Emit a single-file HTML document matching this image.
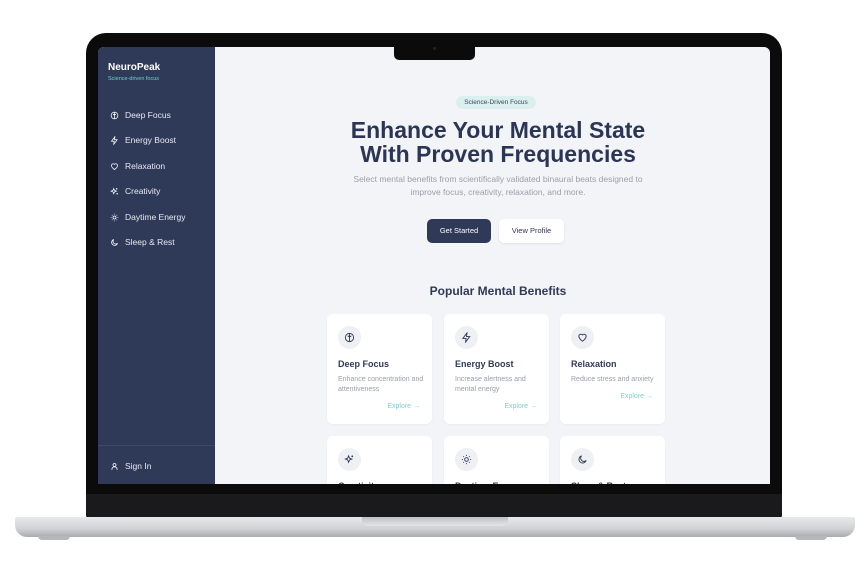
<!DOCTYPE html>
<html><head><style>
*{margin:0;padding:0;box-sizing:border-box}
body{width:864px;height:575px;background:#fff;position:relative;overflow:hidden;font-family:"Liberation Sans",sans-serif}
.abs{position:absolute}
.bezel{left:86px;top:33px;width:696px;height:486px;background:#0b0b0c;border-radius:20px 20px 4px 4px}
.screen{left:98px;top:47px;width:672px;height:437px;background:#f3f4f8;overflow:hidden;border-radius:6px 6px 0 0}
.side{left:0;top:0;width:117px;height:437px;background:#2f3a58;color:#fff}
.nav{position:absolute;left:12px;font-size:8.5px;color:#e6e9f2;display:flex;align-items:center;gap:6px}
.nav svg{width:9px;height:9px}
.card{position:absolute;width:105px;height:110px;background:#fff;border-radius:6px;box-shadow:0 1px 2px rgba(0,0,0,.04)}
.ic{position:absolute;left:11px;top:12px;width:23px;height:23px;border-radius:50%;background:#eef0f4;display:flex;align-items:center;justify-content:center}
.ic svg{width:11px;height:11px}
.ct{position:absolute;left:11px;top:45px;font-size:9px;font-weight:bold;color:#2f3a58}
.cd{position:absolute;left:11px;top:61px;font-size:7px;color:#9aa0ab;line-height:10px;width:90px}
.ce{position:absolute;right:12px;font-size:7px;color:#7fd0d0}
</style></head><body>
<div class="abs bezel"></div>
<div class="abs" style="left:86px;top:494px;width:696px;height:24px;background:#1a1a1c;border-radius:0 0 6px 6px"></div>
<div class="abs screen">
 <div class="abs side">
  <div class="abs" style="left:10px;top:15px;font-size:10px;font-weight:bold">NeuroPeak</div>
  <div class="abs" style="left:10px;top:29px;font-size:5.5px;color:#6fd3cf">Science-driven focus</div>
  <div class="nav" style="top:63px"><svg viewBox="0 0 24 24" fill="none" stroke="#fff" stroke-width="2"><circle cx="12" cy="12" r="9"/><path d="M12 4v16M8 9c2 0 4 1 4 3M16 9c-2 0-4 1-4 3"/></svg>Deep Focus</div>
  <div class="nav" style="top:88px"><svg viewBox="0 0 24 24" fill="none" stroke="#fff" stroke-width="2"><path d="M13 2L4 14h7l-1 8 9-12h-7z"/></svg>Energy Boost</div>
  <div class="nav" style="top:114px"><svg viewBox="0 0 24 24" fill="none" stroke="#fff" stroke-width="2"><path d="M12 20s-8-5-8-11a4.5 4.5 0 0 1 8-2.5A4.5 4.5 0 0 1 20 9c0 6-8 11-8 11z"/></svg>Relaxation</div>
  <div class="nav" style="top:139px"><svg viewBox="0 0 24 24" fill="none" stroke="#fff" stroke-width="2"><path d="M10 4l2 5 5 2-5 2-2 5-2-5-5-2 5-2zM18 3v4M16 5h4M19 16v4M17 18h4"/></svg>Creativity</div>
  <div class="nav" style="top:165px"><svg viewBox="0 0 24 24" fill="none" stroke="#fff" stroke-width="2"><circle cx="12" cy="12" r="4"/><path d="M12 2v2M12 20v2M2 12h2M20 12h2M5 5l1.5 1.5M17.5 17.5L19 19M5 19l1.5-1.5M17.5 6.5L19 5"/></svg>Daytime Energy</div>
  <div class="nav" style="top:190px"><svg viewBox="0 0 24 24" fill="none" stroke="#fff" stroke-width="2"><path d="M20 14A8 8 0 1 1 10 4a6 6 0 0 0 10 10z"/></svg>Sleep &amp; Rest</div>
  <div class="abs" style="left:0;top:398px;width:117px;height:1px;background:#3d486a"></div>
  <div class="nav" style="top:414px"><svg viewBox="0 0 24 24" fill="none" stroke="#fff" stroke-width="2"><circle cx="12" cy="8" r="4"/><path d="M5 21c0-5 3-8 7-8s7 3 7 8"/></svg>Sign In</div>
 </div>
 <div class="abs" style="left:358px;top:49px;width:80px;height:13px;border-radius:7px;background:#dcefef;font-size:6.5px;color:#3a4560;text-align:center;line-height:13px">Science-Driven Focus</div>
 <div class="abs" style="left:117px;top:71px;width:566px;text-align:center;font-size:23px;font-weight:bold;color:#2b3554;line-height:24px">Enhance Your Mental State<br>With Proven Frequencies</div>
 <div class="abs" style="left:117px;top:126px;width:566px;text-align:center;font-size:8.5px;color:#9a9fa8;line-height:13px">Select mental benefits from scientifically validated binaural beats designed to<br>improve focus, creativity, relaxation, and more.</div>
 <div class="abs" style="left:329px;top:172px;width:64px;height:24px;border-radius:5px;background:#2f3a58;color:#fff;font-size:7.5px;text-align:center;line-height:24px">Get Started</div>
 <div class="abs" style="left:401px;top:172px;width:65px;height:24px;border-radius:5px;background:#fff;color:#2f3a58;font-size:7.5px;text-align:center;line-height:24px;box-shadow:0 1px 2px rgba(0,0,0,.08)">View Profile</div>
 <div class="abs" style="left:117px;top:237px;width:566px;text-align:center;font-size:12px;font-weight:bold;color:#2f3a58">Popular Mental Benefits</div>
 <div class="card" style="left:229px;top:267px"><div class="ic"><svg viewBox="0 0 24 24" fill="none" stroke="#2f3a58" stroke-width="2"><circle cx="12" cy="12" r="9"/><path d="M12 4v16M8 9c2 0 4 1 4 3M16 9c-2 0-4 1-4 3"/></svg></div><div class="ct">Deep Focus</div><div class="cd">Enhance concentration and attentiveness</div><div class="ce" style="top:89px">Explore →</div></div>
 <div class="card" style="left:346px;top:267px"><div class="ic"><svg viewBox="0 0 24 24" fill="none" stroke="#2f3a58" stroke-width="2"><path d="M13 2L4 14h7l-1 8 9-12h-7z"/></svg></div><div class="ct">Energy Boost</div><div class="cd">Increase alertness and mental energy</div><div class="ce" style="top:89px">Explore →</div></div>
 <div class="card" style="left:462px;top:267px"><div class="ic"><svg viewBox="0 0 24 24" fill="none" stroke="#2f3a58" stroke-width="2"><path d="M12 20s-8-5-8-11a4.5 4.5 0 0 1 8-2.5A4.5 4.5 0 0 1 20 9c0 6-8 11-8 11z"/></svg></div><div class="ct">Relaxation</div><div class="cd" style="width:95px">Reduce stress and anxiety</div><div class="ce" style="top:79px">Explore →</div></div>
 <div class="card" style="left:229px;top:389px"><div class="ic"><svg viewBox="0 0 24 24" fill="none" stroke="#2f3a58" stroke-width="2"><path d="M10 4l2 5 5 2-5 2-2 5-2-5-5-2 5-2zM18 3v4M16 5h4"/></svg></div><div class="ct">Creativity</div></div>
 <div class="card" style="left:346px;top:389px"><div class="ic"><svg viewBox="0 0 24 24" fill="none" stroke="#2f3a58" stroke-width="2"><circle cx="12" cy="12" r="4"/><path d="M12 2v2M12 20v2M2 12h2M20 12h2M5 5l1.5 1.5M17.5 17.5L19 19M5 19l1.5-1.5M17.5 6.5L19 5"/></svg></div><div class="ct">Daytime Energy</div></div>
 <div class="card" style="left:462px;top:389px"><div class="ic"><svg viewBox="0 0 24 24" fill="none" stroke="#2f3a58" stroke-width="2"><path d="M20 14A8 8 0 1 1 10 4a6 6 0 0 0 10 10z"/></svg></div><div class="ct">Sleep &amp; Rest</div></div>
</div>
<div class="abs" style="left:394px;top:45px;width:81px;height:15px;background:#0b0b0c;border-radius:0 0 5px 5px"></div>
<div class="abs" style="left:433px;top:47px;width:3px;height:3px;border-radius:50%;background:#1f2430"></div>
<div class="abs" style="left:15px;top:517px;width:840px;height:20px;border-radius:2px 2px 12px 12px;background:linear-gradient(#e8e9eb,#cfd1d4 60%,#a9abaf)"></div>
<div class="abs" style="left:362px;top:517px;width:146px;height:9px;border-radius:0 0 6px 6px;background:linear-gradient(#bfc1c4,#e4e5e7)"></div>
<div class="abs" style="left:38px;top:536px;width:32px;height:4px;border-radius:0 0 4px 4px;background:#b5b7ba"></div>
<div class="abs" style="left:795px;top:536px;width:32px;height:4px;border-radius:0 0 4px 4px;background:#b5b7ba"></div>
</body></html>
